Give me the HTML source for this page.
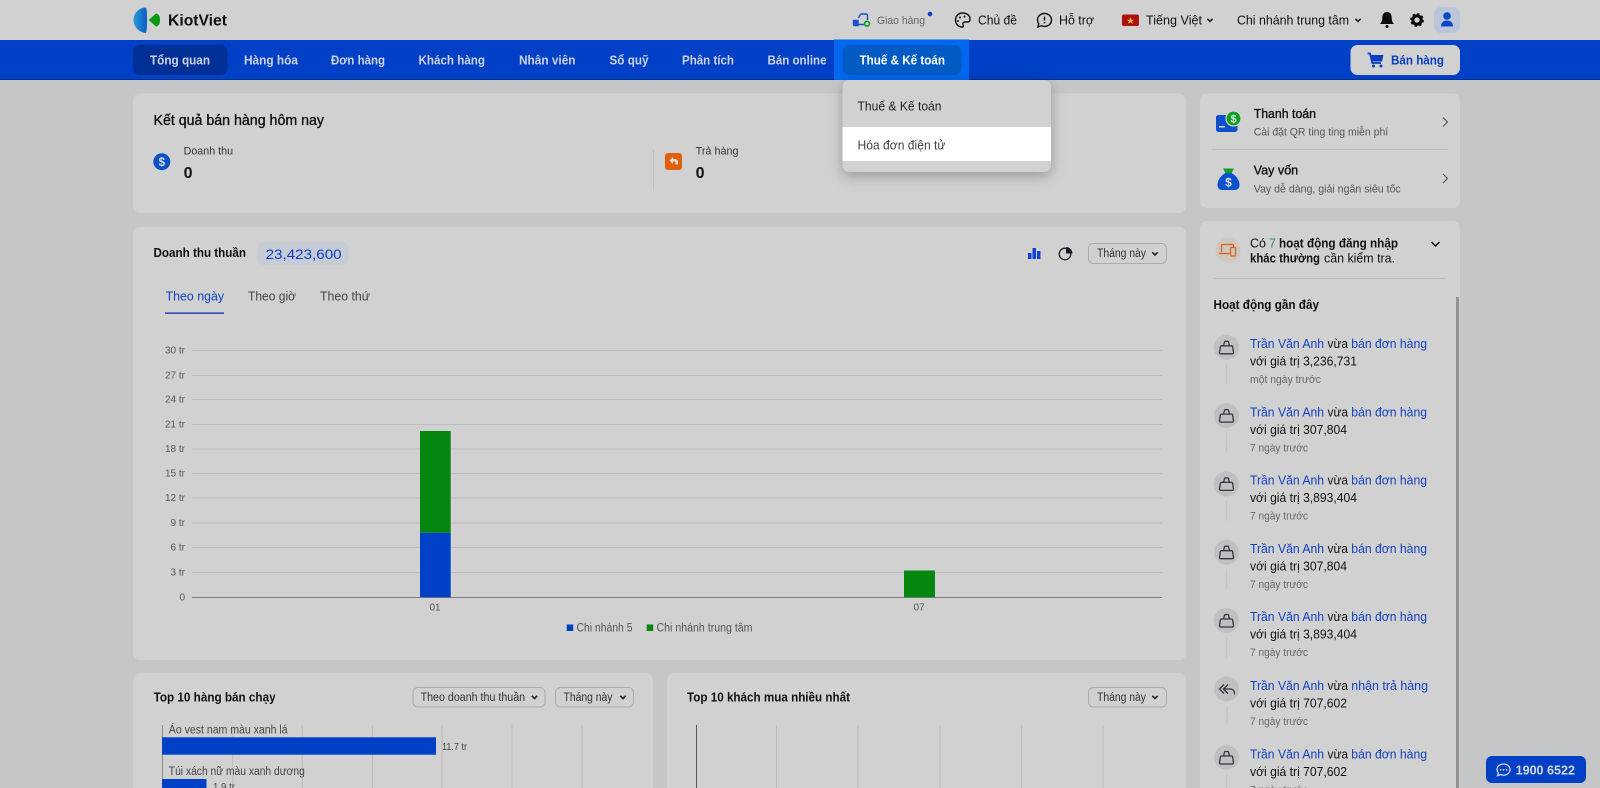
<!DOCTYPE html>
<html lang="vi"><head><meta charset="utf-8"><title>KiotViet</title>
<style>
html,body{margin:0;padding:0;width:1600px;height:788px;overflow:hidden;background:#c5c6c8}
svg{display:block;filter:blur(.3px)}
text{font-family:"Liberation Sans",sans-serif;font-size:12.5px;fill:#111;white-space:pre}
.m{stroke:#111;stroke-width:.35px}
.b{font-weight:700}
.nav{font-size:13px;font-weight:700;fill:#ccd3e6}
.ax{font-size:10px;fill:#555}
.s{font-size:11.5px;fill:#555}
.sel{font-size:11.5px;fill:#333}
.bl{fill:#1242c0}
.g{fill:#666;font-size:11px}
.grid{stroke:#bcbdbf;stroke-width:1}
.chev{fill:none;stroke:#222;stroke-width:1.6}
.box{fill:none;stroke:#a9abad;stroke-width:1}
</style></head><body>
<svg width="1600" height="788" viewBox="0 0 1600 788" xmlns="http://www.w3.org/2000/svg">
<defs>
<linearGradient id="lg" x1="0" x2="1" y1="0" y2="0"><stop offset="0" stop-color="#2a9ad8"/><stop offset="1" stop-color="#0a5cc0"/></linearGradient>
<g id="bag"><circle cx="0" cy="0" r="12.500" fill="#bfc0c2"/><path d="M-5 -1.500h10c.6 0 1 .4 1.100 1l.9 5.500c.1.800-.4 1.500-1.200 1.500h-11.600c-.8 0-1.300-.7-1.200-1.500l.9-5.500c.1-.6.500-1 1.100-1z" fill="none" stroke="#33363c" stroke-width="1.300"/><path d="M-3 -1.500l1-3.800c.1-.5.500-.7 1-.7h2c.5 0 .9.200 1 .7l1 3.800" fill="none" stroke="#33363c" stroke-width="1.300"/><path d="M0 17v20" stroke="#c4c5c7" stroke-width="1.300"/></g>
<path id="dn" d="M-2.700 -1.200L0 1.500l2.700 -2.700" class="chev"/>
</defs>
<rect width="1600" height="788" fill="#c5c6c8"/>

<!-- top bar -->
<rect width="1600" height="40" fill="#d1d1d1"/>
<path d="M146 7.500C139 7.500 133.500 13 133.500 20S139 32.500 146 33C147.500 28 147.500 12 146 7.500z" fill="url(#lg)"/>
<path d="M148.700 20L156 13.500C159 14 160 17 160 20S159 26 156 26.500z" fill="#0a9a10"/>
<text x="168" y="25.500" class="b" style="font-size:15.500px" fill="#10182a" textLength="59" lengthAdjust="spacingAndGlyphs">KiotViet</text>

<path d="M858.500 18l1.500-3c.3-.6.800-1 1.500-1h4c1.300 0 2 .8 2 2v4" fill="none" stroke="#1a50c8" stroke-width="1.400"/>
<path d="M853.500 20.500h4.500v5h-3.500c-.6 0-1-.4-1-1zM858 24.500h6" fill="none" stroke="#1a50c8" stroke-width="1.400"/>
<rect x="854" y="21" width="3.500" height="4.500" fill="#1a50c8"/>
<circle cx="867" cy="23.700" r="2.400" fill="none" stroke="#0a9a20" stroke-width="1.600"/>
<text x="877" y="24" class="g" textLength="48" lengthAdjust="spacingAndGlyphs">Giao hàng</text>
<circle cx="930" cy="14" r="2.300" fill="#0d3fc4"/>
<path d="M962.500 13c-4 0-7 3-7 7s3 7 6.500 7c2 0 1.500-1.500 1-2.500-.5-1.500.5-2.500 2-2.500h2.500c1.500 0 2.500-1 2.500-3 0-3.500-3-6-7.500-6z" fill="none" stroke="#111" stroke-width="1.400"/>
<circle cx="960" cy="17.500" r="1" fill="#111"/><circle cx="964.500" cy="16.500" r="1" fill="#111"/><circle cx="958" cy="21" r="1" fill="#111"/>
<text x="978" y="24.500" style="font-size:12.500px" textLength="39" lengthAdjust="spacingAndGlyphs">Chủ đề</text>
<path d="M1044.500 13.500c-4 0-7 2.800-7 6.500 0 1.500.5 2.800 1.300 3.800l-1 3.200 3.500-1.300c1 .5 2.100.7 3.200.7 4 0 7-2.800 7-6.400s-3-6.500-7-6.500z" fill="none" stroke="#111" stroke-width="1.400"/>
<path d="M1044.500 16.500v4M1044.500 22v1.500" stroke="#111" stroke-width="1.400"/>
<text x="1059" y="24.500" textLength="35" lengthAdjust="spacingAndGlyphs">Hỗ trợ</text>
<rect x="1122" y="14.500" width="17" height="11.500" rx="2" fill="#b01010"/>
<path d="M1130.500 17l1 2.700h2.600l-2.100 1.600.8 2.600-2.300-1.600-2.300 1.600.8-2.600-2.100-1.600h2.600z" fill="#e8c820"/>
<text x="1146" y="24.500" textLength="56" lengthAdjust="spacingAndGlyphs">Tiếng Việt</text>
<use href="#dn" x="1210" y="20"/>
<text x="1237" y="24.500" textLength="112" lengthAdjust="spacingAndGlyphs">Chi nhánh trung tâm</text>
<use href="#dn" x="1358" y="20"/>
<path d="M1387 12c-3.200 0-4.700 2.500-4.700 5.500 0 3.500-1 5-2.300 6.500h14c-1.300-1.500-2.300-3-2.300-6.500 0-3-1.500-5.500-4.700-5.500z" fill="#0c0c10"/>
<circle cx="1387" cy="26.500" r="1.500" fill="#0c0c10"/>
<circle cx="1417" cy="20" r="4.200" fill="none" stroke="#0c0c10" stroke-width="3.200"/>
<circle cx="1417" cy="20" r="6" fill="none" stroke="#0c0c10" stroke-width="1.800" stroke-dasharray="2.400 2.300"/>
<rect x="1434" y="7" width="26" height="26" rx="7" fill="#b9c6d9"/>
<circle cx="1447" cy="16" r="3.800" fill="#0d45c8"/>
<path d="M1441 26.500c0-4 2.500-6 6-6s6 2 6 6z" fill="#0d45c8"/>

<!-- nav -->
<rect y="40" width="1600" height="40" fill="#0040c6"/>
<rect y="79" width="1600" height="1" fill="#002f96"/>
<rect x="133" y="45" width="94.500" height="30" rx="7" fill="#002f95"/>
<text x="150" y="64.500" class="nav" textLength="60" lengthAdjust="spacingAndGlyphs">Tổng quan</text>
<text x="244" y="64.500" class="nav" textLength="54" lengthAdjust="spacingAndGlyphs">Hàng hóa</text>
<text x="331" y="64.500" class="nav" textLength="54" lengthAdjust="spacingAndGlyphs">Đơn hàng</text>
<text x="418.500" y="64.500" class="nav" textLength="66.500" lengthAdjust="spacingAndGlyphs">Khách hàng</text>
<text x="519" y="64.500" class="nav" textLength="56.500" lengthAdjust="spacingAndGlyphs">Nhân viên</text>
<text x="609.500" y="64.500" class="nav" textLength="39" lengthAdjust="spacingAndGlyphs">Sổ quỹ</text>
<text x="682" y="64.500" class="nav" textLength="52" lengthAdjust="spacingAndGlyphs">Phân tích</text>
<text x="767.500" y="64.500" class="nav" textLength="59" lengthAdjust="spacingAndGlyphs">Bán online</text>
<rect x="834" y="39.500" width="135" height="40.500" fill="#0068f0"/>
<rect x="842.500" y="45" width="119" height="30" rx="7" fill="#005bc4"/>
<text x="859.500" y="64.500" class="nav" style="fill:#fff" textLength="85.500" lengthAdjust="spacingAndGlyphs">Thuế &amp; Kế toán</text>
<rect x="1350.500" y="45" width="109.500" height="30" rx="7" fill="#d1d1d1"/>
<path d="M1367.500 53.500h2.500l2.300 9.500h8.700" fill="none" stroke="#0a3dbd" stroke-width="1.800"/>
<path d="M1370.500 55h13l-1.500 6.500h-10z" fill="#0a3dbd"/>
<circle cx="1373.500" cy="66" r="1.500" fill="#0a3dbd"/><circle cx="1381" cy="66" r="1.500" fill="#0a3dbd"/>
<text x="1391" y="64.500" class="b" style="font-size:13px;fill:#0a3dbd" textLength="53" lengthAdjust="spacingAndGlyphs">Bán hàng</text>

<!-- card 1 -->
<rect x="133" y="93.500" width="1053" height="119.500" rx="7" fill="#d1d1d1"/>
<text x="153.500" y="124.800" class="m" style="font-size:14.500px" textLength="170.500" lengthAdjust="spacingAndGlyphs">Kết quả bán hàng hôm nay</text>
<circle cx="161.800" cy="161.700" r="8.500" fill="#0d50c4"/>
<text x="161.800" y="165.800" text-anchor="middle" class="b" style="font-size:11.500px;fill:#d4dcef">$</text>
<text x="183.600" y="154.500" style="font-size:11px;fill:#333" textLength="49.500" lengthAdjust="spacingAndGlyphs">Doanh thu</text>
<text x="183.600" y="177.800" class="b" style="font-size:16px">0</text>
<rect x="653" y="150" width="1" height="41" fill="#bfc0c2"/>
<rect x="665" y="153" width="17" height="17" rx="3" fill="#e0600a"/>
<path d="M669.500 160.500l3.500-3.500v2h2c2 0 3 1.500 3 3v2.500h-2.500v-2c0-.7-.5-1-1-1H673v2.500z" fill="#e8e0d8"/>
<text x="695.600" y="154.500" style="font-size:11px;fill:#333" textLength="43" lengthAdjust="spacingAndGlyphs">Trả hàng</text>
<text x="695.600" y="177.800" class="b" style="font-size:16px">0</text>

<!-- card 2 -->
<rect x="133" y="226.700" width="1053" height="433.300" rx="7" fill="#d1d1d1"/>
<text x="153.500" y="257" class="b" style="font-size:12.500px" textLength="92.500" lengthAdjust="spacingAndGlyphs">Doanh thu thuần</text>
<rect x="257.400" y="242" width="91.200" height="23" rx="6" fill="#c6cbd6"/>
<text x="265.600" y="259" style="font-size:14px;fill:#0b3fc0" textLength="76" lengthAdjust="spacingAndGlyphs">23,423,600</text>
<path d="M1028 253h3.500v6H1028zM1032.500 248h3.500v11h-3.500zM1037 251h3.500v8H1037z" fill="#1242d0"/>
<circle cx="1065" cy="254" r="5.800" fill="none" stroke="#222" stroke-width="1.300"/>
<path d="M1066 247v6.500h6.500c0-3.500-3-6.500-6.500-6.500z" fill="#1a1a2a"/>
<rect x="1088.500" y="243.500" width="78" height="20" rx="5" class="box"/>
<text x="1097" y="257" class="sel" textLength="49" lengthAdjust="spacingAndGlyphs">Tháng này</text>
<use href="#dn" x="1155" y="253.500"/>
<text x="165.600" y="300.500" class="bl" style="font-size:12.500px" textLength="58.500" lengthAdjust="spacingAndGlyphs">Theo ngày</text>
<text x="248" y="300.500" style="font-size:12.500px;fill:#444" textLength="48" lengthAdjust="spacingAndGlyphs">Theo giờ</text>
<text x="320" y="300.500" style="font-size:12.500px;fill:#444" textLength="50" lengthAdjust="spacingAndGlyphs">Theo thứ</text>
<rect x="165" y="312.500" width="59" height="1.300" fill="#0a2fb8"/>

<!-- chart -->
<path class="grid" d="M192 350.500H1162M192 375.500H1162M192 399.500H1162M192 424.500H1162M192 449H1162M192 473.500H1162M192 498H1162M192 523H1162M192 547.500H1162M192 572.500H1162"/>
<rect x="192" y="597" width="970" height="1" fill="#7a7c84"/>
<text x="185" y="353.500" text-anchor="end" class="ax">30 tr</text>
<text x="185" y="378.500" text-anchor="end" class="ax">27 tr</text>
<text x="185" y="402.500" text-anchor="end" class="ax">24 tr</text>
<text x="185" y="427.500" text-anchor="end" class="ax">21 tr</text>
<text x="185" y="452" text-anchor="end" class="ax">18 tr</text>
<text x="185" y="476.500" text-anchor="end" class="ax">15 tr</text>
<text x="185" y="501" text-anchor="end" class="ax">12 tr</text>
<text x="185" y="526" text-anchor="end" class="ax">9 tr</text>
<text x="185" y="550.500" text-anchor="end" class="ax">6 tr</text>
<text x="185" y="575.500" text-anchor="end" class="ax">3 tr</text>
<text x="185" y="600.500" text-anchor="end" class="ax">0</text>
<rect x="420" y="431" width="30.700" height="101.700" fill="#04860f"/>
<rect x="420" y="532.700" width="30.700" height="64.500" fill="#0040c6"/>
<rect x="904" y="570.500" width="31" height="26.700" fill="#04860f"/>
<text x="435" y="610.500" text-anchor="middle" class="ax">01</text>
<text x="919" y="610.500" text-anchor="middle" class="ax">07</text>
<rect x="566.700" y="624.500" width="6.500" height="6.500" fill="#0040c6"/>
<text x="576.500" y="631.500" class="s" textLength="56" lengthAdjust="spacingAndGlyphs">Chi nhánh 5</text>
<rect x="646.700" y="624.500" width="6.500" height="6.500" fill="#04860f"/>
<text x="656.500" y="631.500" class="s" textLength="96" lengthAdjust="spacingAndGlyphs">Chi nhánh trung tâm</text>

<!-- card 3 -->
<rect x="133.500" y="673" width="519.500" height="130" rx="7" fill="#d1d1d1"/>
<text x="153.600" y="701.500" class="b" style="font-size:12.500px" textLength="122" lengthAdjust="spacingAndGlyphs">Top 10 hàng bán chạy</text>
<rect x="413" y="687.500" width="132" height="19.500" rx="5" class="box"/>
<text x="420.600" y="701" class="sel" textLength="104.500" lengthAdjust="spacingAndGlyphs">Theo doanh thu thuần</text>
<use href="#dn" x="534.500" y="697"/>
<rect x="555.500" y="687.500" width="78" height="19.500" rx="5" class="box"/>
<text x="563.500" y="701" class="sel" textLength="49" lengthAdjust="spacingAndGlyphs">Tháng này</text>
<use href="#dn" x="623" y="697"/>
<path class="grid" d="M232.700 725V788M302.300 725V788M372.400 725V788M442 725V788M512 725V788M582 725V788"/>
<rect x="162" y="725" width="1" height="63" fill="#8a8c90"/>
<text x="168.800" y="733.500" class="s" style="fill:#444" textLength="118.800" lengthAdjust="spacingAndGlyphs">Áo vest nam màu xanh lá</text>
<rect x="162" y="737.300" width="274" height="17.400" fill="#0040c6"/>
<text x="442" y="750" class="ax" style="fill:#444" textLength="25" lengthAdjust="spacingAndGlyphs">11.7 tr</text>
<text x="168.800" y="775" class="s" style="fill:#444" textLength="136" lengthAdjust="spacingAndGlyphs">Túi xách nữ màu xanh dương</text>
<rect x="162" y="779" width="44.500" height="9" fill="#0040c6"/>
<text x="213" y="790" class="ax" style="fill:#444" textLength="22" lengthAdjust="spacingAndGlyphs">1.9 tr</text>

<!-- card 4 -->
<rect x="667" y="673" width="519" height="130" rx="7" fill="#d1d1d1"/>
<text x="687" y="701.500" class="b" style="font-size:12.500px" textLength="163" lengthAdjust="spacingAndGlyphs">Top 10 khách mua nhiều nhất</text>
<rect x="1088.500" y="687.500" width="78" height="19.500" rx="5" class="box"/>
<text x="1097" y="701" class="sel" textLength="49" lengthAdjust="spacingAndGlyphs">Tháng này</text>
<use href="#dn" x="1155" y="697"/>
<path class="grid" d="M776.500 725V788M858 725V788M940 725V788M1021.500 725V788M1103 725V788"/>
<rect x="696" y="725" width="1" height="63" fill="#55575c"/>

<!-- right card 1 -->
<rect x="1200" y="93.500" width="260" height="114.500" rx="7" fill="#d1d1d1"/>
<rect x="1216" y="115" width="21.500" height="17" rx="2.500" fill="#0d50cc"/>
<rect x="1219" y="126" width="6" height="1.500" fill="#d0d8ea"/>
<circle cx="1233.500" cy="118.500" r="7.500" fill="#0aa020" stroke="#d1d1d1" stroke-width="1.200"/>
<text x="1233.500" y="122.500" text-anchor="middle" class="b" style="font-size:11px;fill:#e8efe8">$</text>
<text x="1253.700" y="117.800" style="font-size:12.500px" class="m" textLength="62.300" lengthAdjust="spacingAndGlyphs">Thanh toán</text>
<text x="1253.700" y="135.500" class="g" style="fill:#555" textLength="134.500" lengthAdjust="spacingAndGlyphs">Cài đặt QR ting ting miễn phí</text>
<path d="M1443 117.500l4.500 4.500-4.500 4.500" fill="none" stroke="#555" stroke-width="1.100"/>
<rect x="1212" y="149" width="236" height="1" fill="#bcbdbf"/>
<path d="M1223 168.500h11l-2.500 4.500h-6z" fill="#0aa020"/>
<path d="M1225.500 173h6c4.500 2.500 7.500 6.500 8 11 .3 3.500-1.500 6-4.500 6h-13c-3 0-4.800-2.500-4.500-6 .5-4.500 3.500-8.500 8-11z" fill="#0d50cc"/>
<text x="1228.500" y="186.500" text-anchor="middle" class="b" style="font-size:12px;fill:#d8e0f0">$</text>
<text x="1253.700" y="174.500" style="font-size:12.500px" class="m" textLength="44.500" lengthAdjust="spacingAndGlyphs">Vay vốn</text>
<text x="1253.700" y="192.500" class="g" style="fill:#555" textLength="147" lengthAdjust="spacingAndGlyphs">Vay dễ dàng, giải ngân siêu tốc</text>
<path d="M1443 174l4.500 4.500-4.500 4.500" fill="none" stroke="#555" stroke-width="1.100"/>

<!-- right card 2 -->
<rect x="1200" y="221" width="260" height="580" rx="7" fill="#d1d1d1"/>
<circle cx="1228" cy="250" r="12.500" fill="#d0c8bf"/>
<path d="M1221.500 252v-6.500c0-.6.400-1 1-1h10c.6 0 1 .4 1 1v2M1219 253.500h10.500" fill="none" stroke="#d8601a" stroke-width="1.300"/>
<rect x="1230.500" y="247.500" width="5" height="8.500" rx="1" fill="none" stroke="#d8601a" stroke-width="1.200"/>
<text x="1250" y="247.500" style="font-size:12.500px" textLength="16" lengthAdjust="spacingAndGlyphs">Có</text>
<text x="1269" y="247.500" style="font-size:12.500px;fill:#3a8a4a">7</text>
<text x="1279" y="247.500" class="b" style="font-size:12.500px" textLength="119" lengthAdjust="spacingAndGlyphs">hoạt động đăng nhập</text>
<text x="1250" y="262.500" class="b" style="font-size:12.500px" textLength="70" lengthAdjust="spacingAndGlyphs">khác thường</text>
<text x="1324" y="262.500" style="font-size:12.500px" textLength="71" lengthAdjust="spacingAndGlyphs">cần kiểm tra.</text>
<path d="M1431.500 242l4 4 4-4" fill="none" stroke="#111" stroke-width="1.500"/>
<rect x="1214" y="278" width="232" height="1" fill="#bcbdbf"/>
<text x="1213.500" y="309" class="b" style="font-size:12.500px" textLength="105.500" lengthAdjust="spacingAndGlyphs">Hoạt động gần đây</text>
<rect x="1456" y="297" width="3" height="491" fill="#8f9296"/>

<!-- activity 1 -->
<use href="#bag" x="1226.500" y="347.300"/>
<text x="1250" y="348" class="bl" textLength="74" lengthAdjust="spacingAndGlyphs">Trần Văn Anh</text>
<text x="1327.500" y="348" textLength="20.500" lengthAdjust="spacingAndGlyphs">vừa</text>
<text x="1351.300" y="348" class="bl" textLength="75.700" lengthAdjust="spacingAndGlyphs">bán đơn hàng</text>
<text x="1250" y="365.500" textLength="107" lengthAdjust="spacingAndGlyphs">với giá trị 3,236,731</text>
<text x="1250" y="383" class="g" textLength="71" lengthAdjust="spacingAndGlyphs">một ngày trước</text>
<!-- activity 2 -->
<use href="#bag" x="1226.500" y="415.600"/>
<text x="1250" y="416.300" class="bl" textLength="74" lengthAdjust="spacingAndGlyphs">Trần Văn Anh</text>
<text x="1327.500" y="416.300" textLength="20.500" lengthAdjust="spacingAndGlyphs">vừa</text>
<text x="1351.300" y="416.300" class="bl" textLength="75.700" lengthAdjust="spacingAndGlyphs">bán đơn hàng</text>
<text x="1250" y="433.800" textLength="97" lengthAdjust="spacingAndGlyphs">với giá trị 307,804</text>
<text x="1250" y="451.300" class="g" textLength="58" lengthAdjust="spacingAndGlyphs">7 ngày trước</text>
<!-- activity 3 -->
<use href="#bag" x="1226.500" y="483.900"/>
<text x="1250" y="484.600" class="bl" textLength="74" lengthAdjust="spacingAndGlyphs">Trần Văn Anh</text>
<text x="1327.500" y="484.600" textLength="20.500" lengthAdjust="spacingAndGlyphs">vừa</text>
<text x="1351.300" y="484.600" class="bl" textLength="75.700" lengthAdjust="spacingAndGlyphs">bán đơn hàng</text>
<text x="1250" y="502.100" textLength="107" lengthAdjust="spacingAndGlyphs">với giá trị 3,893,404</text>
<text x="1250" y="519.600" class="g" textLength="58" lengthAdjust="spacingAndGlyphs">7 ngày trước</text>
<!-- activity 4 -->
<use href="#bag" x="1226.500" y="552.200"/>
<text x="1250" y="552.900" class="bl" textLength="74" lengthAdjust="spacingAndGlyphs">Trần Văn Anh</text>
<text x="1327.500" y="552.900" textLength="20.500" lengthAdjust="spacingAndGlyphs">vừa</text>
<text x="1351.300" y="552.900" class="bl" textLength="75.700" lengthAdjust="spacingAndGlyphs">bán đơn hàng</text>
<text x="1250" y="570.400" textLength="97" lengthAdjust="spacingAndGlyphs">với giá trị 307,804</text>
<text x="1250" y="587.900" class="g" textLength="58" lengthAdjust="spacingAndGlyphs">7 ngày trước</text>
<!-- activity 5 -->
<use href="#bag" x="1226.500" y="620.500"/>
<text x="1250" y="621.200" class="bl" textLength="74" lengthAdjust="spacingAndGlyphs">Trần Văn Anh</text>
<text x="1327.500" y="621.200" textLength="20.500" lengthAdjust="spacingAndGlyphs">vừa</text>
<text x="1351.300" y="621.200" class="bl" textLength="75.700" lengthAdjust="spacingAndGlyphs">bán đơn hàng</text>
<text x="1250" y="638.700" textLength="107" lengthAdjust="spacingAndGlyphs">với giá trị 3,893,404</text>
<text x="1250" y="656.200" class="g" textLength="58" lengthAdjust="spacingAndGlyphs">7 ngày trước</text>
<!-- activity 6 -->
<circle cx="1226.500" cy="689" r="12.500" fill="#bfc0c2"/>
<path d="M1224 684.500l-4.500 4.500 4.500 4.500M1228 684.500l-4.500 4.500 4.500 4.500" fill="none" stroke="#33363c" stroke-width="1.300"/>
<path d="M1224 689h6c3 0 4.500 2 4.500 4.500v1" fill="none" stroke="#33363c" stroke-width="1.300"/>
<path d="M1227 706v19" stroke="#c4c5c7" stroke-width="1.300"/>
<text x="1250" y="690" class="bl" textLength="74" lengthAdjust="spacingAndGlyphs">Trần Văn Anh</text>
<text x="1327.500" y="690" textLength="20.500" lengthAdjust="spacingAndGlyphs">vừa</text>
<text x="1351.300" y="690" class="bl" textLength="76.700" lengthAdjust="spacingAndGlyphs">nhận trả hàng</text>
<text x="1250" y="707.500" textLength="97" lengthAdjust="spacingAndGlyphs">với giá trị 707,602</text>
<text x="1250" y="725" class="g" textLength="58" lengthAdjust="spacingAndGlyphs">7 ngày trước</text>
<!-- activity 7 -->
<use href="#bag" x="1226.500" y="757.500"/>
<text x="1250" y="758.300" class="bl" textLength="74" lengthAdjust="spacingAndGlyphs">Trần Văn Anh</text>
<text x="1327.500" y="758.300" textLength="20.500" lengthAdjust="spacingAndGlyphs">vừa</text>
<text x="1351.300" y="758.300" class="bl" textLength="75.700" lengthAdjust="spacingAndGlyphs">bán đơn hàng</text>
<text x="1250" y="775.800" textLength="97" lengthAdjust="spacingAndGlyphs">với giá trị 707,602</text>
<text x="1250" y="793.300" class="g" textLength="58" lengthAdjust="spacingAndGlyphs">7 ngày trước</text>

<!-- phone -->
<rect x="1486" y="756" width="100" height="27" rx="6" fill="#0040c6"/>
<path d="M1503.500 764c-3.800 0-6.500 2.500-6.500 5.500 0 1.300.5 2.500 1.300 3.400l-.8 2.800 3.200-1.200c.9.400 1.800.6 2.800.6 3.800 0 6.500-2.500 6.500-5.600s-2.700-5.500-6.500-5.500z" fill="none" stroke="#d3d9e8" stroke-width="1.300"/>
<path d="M1500.500 769.800h.01M1503.500 769.800h.01M1506.500 769.800h.01" stroke="#d3d9e8" stroke-width="1.800" stroke-linecap="round"/>
<text x="1515.600" y="774.700" class="b" style="font-size:13px;fill:#d3d9e8" textLength="59.400" lengthAdjust="spacingAndGlyphs">1900 6522</text>

<!-- dropdown -->
<defs><filter id="sh" x="-20%" y="-20%" width="140%" height="160%"><feDropShadow dx="0" dy="4" stdDeviation="7" flood-color="#000" flood-opacity=".28"/></filter></defs>
<rect x="842.500" y="80" width="208.500" height="92" rx="7" fill="#d1d1d1" filter="url(#sh)"/>
<rect x="842.500" y="127" width="208.500" height="34" fill="#fff"/>
<text x="857.500" y="110.500" style="font-size:12.500px;fill:#222" textLength="84" lengthAdjust="spacingAndGlyphs">Thuế &amp; Kế toán</text>
<text x="857.500" y="149.500" style="font-size:12.500px;fill:#444" textLength="88" lengthAdjust="spacingAndGlyphs">Hóa đơn điện tử</text>
</svg>
</body></html>
